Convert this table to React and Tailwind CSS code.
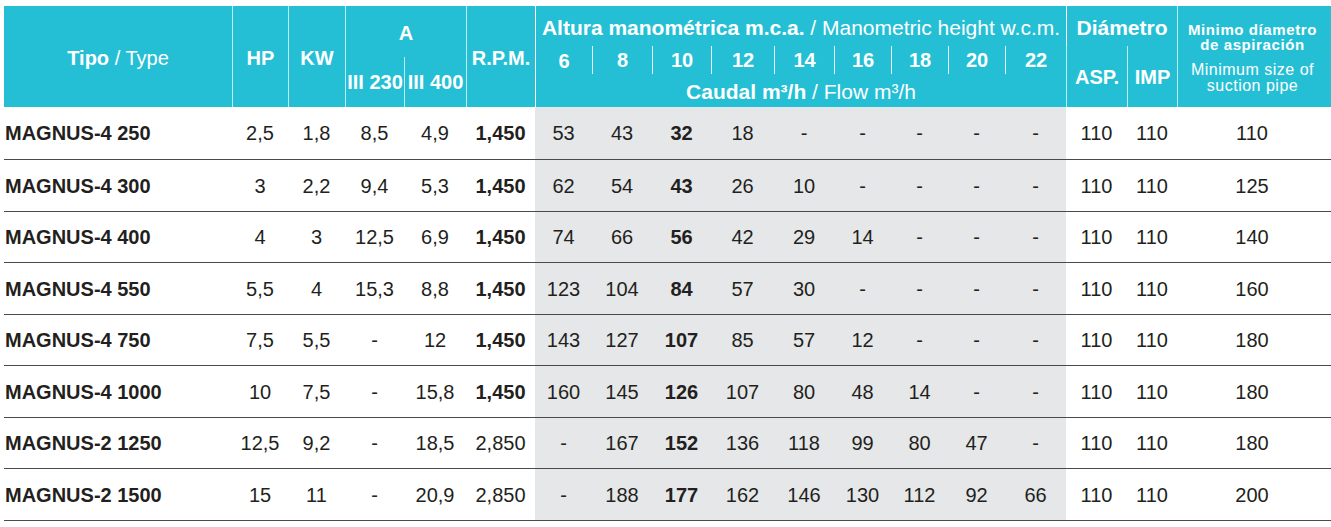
import React from 'react';

const cols =
  'grid grid-cols-[228px_56px_57px_59px_62px_69px_57px_60px_59px_63px_60px_57px_57px_57px_61px_61px_50px_150px]';

const heads = [
  { n: '6', c: 'col-start-7' },
  { n: '8', c: 'col-start-8' },
  { n: '10', c: 'col-start-9' },
  { n: '12', c: 'col-start-10' },
  { n: '14', c: 'col-start-11' },
  { n: '16', c: 'col-start-12' },
  { n: '18', c: 'col-start-13' },
  { n: '20', c: 'col-start-14' },
  { n: '22', c: 'col-start-15' },
];

const rowHeights = ['h-[53px]', 'h-[52px]', 'h-[51px]', 'h-[52px]', 'h-[51px]', 'h-[52px]', 'h-[51px]', 'h-[52px]'];

const pumps = [
  { name: 'MAGNUS-4 250', hp: '2,5', kw: '1,8', a230: '8,5', a400: '4,9', rpm: '1,450', flow: ['53', '43', '32', '18', '-', '-', '-', '-', '-'], min: '110' },
  { name: 'MAGNUS-4 300', hp: '3', kw: '2,2', a230: '9,4', a400: '5,3', rpm: '1,450', flow: ['62', '54', '43', '26', '10', '-', '-', '-', '-'], min: '125' },
  { name: 'MAGNUS-4 400', hp: '4', kw: '3', a230: '12,5', a400: '6,9', rpm: '1,450', flow: ['74', '66', '56', '42', '29', '14', '-', '-', '-'], min: '140' },
  { name: 'MAGNUS-4 550', hp: '5,5', kw: '4', a230: '15,3', a400: '8,8', rpm: '1,450', flow: ['123', '104', '84', '57', '30', '-', '-', '-', '-'], min: '160' },
  { name: 'MAGNUS-4 750', hp: '7,5', kw: '5,5', a230: '-', a400: '12', rpm: '1,450', flow: ['143', '127', '107', '85', '57', '12', '-', '-', '-'], min: '180' },
  { name: 'MAGNUS-4 1000', hp: '10', kw: '7,5', a230: '-', a400: '15,8', rpm: '1,450', flow: ['160', '145', '126', '107', '80', '48', '14', '-', '-'], min: '180' },
  { name: 'MAGNUS-2 1250', hp: '12,5', kw: '9,2', a230: '-', a400: '18,5', rpm: '2,850', flow: ['-', '167', '152', '136', '118', '99', '80', '47', '-'], min: '180' },
  { name: 'MAGNUS-2 1500', hp: '15', kw: '11', a230: '-', a400: '20,9', rpm: '2,850', flow: ['-', '188', '177', '162', '146', '130', '112', '92', '66'], min: '200' },
];

const Header = () => (
  <div className={`${cols} grid-rows-[40px_11px_19px_31px] bg-[#25bfd5] text-white text-[20px] leading-none`}>
    <div className="col-start-1 row-start-1 row-span-4 flex items-center justify-center pt-[3px]">
      <span><b>Tipo</b> / Type</span>
    </div>
    <div className="col-start-2 row-start-1 row-span-4 border-l border-white/70 flex items-center justify-center pt-[3px] font-bold">HP</div>
    <div className="col-start-3 row-start-1 row-span-4 border-l border-white/70 flex items-center justify-center pt-[3px] font-bold">KW</div>
    <div className="col-start-4 col-span-2 row-start-1 row-span-2 border-l border-white/70 flex items-center justify-center pt-[3px] font-bold">A</div>
    <div className="col-start-4 row-start-3 row-span-2 border-l border-white/70 flex items-center justify-center font-bold whitespace-nowrap">III 230</div>
    <div className="col-start-5 row-start-3 row-span-2 border-l border-white/70 flex items-center justify-center font-bold whitespace-nowrap">III 400</div>
    <div className="col-start-6 row-start-1 row-span-4 border-l border-white/70 flex items-center justify-center pt-[3px] font-bold">R.P.M.</div>

    <div className="col-start-7 col-span-9 row-start-1 border-l border-white flex items-center justify-center pt-[3px] text-[21px] whitespace-nowrap">
      <span><b>Altura manométrica m.c.a.</b> / Manometric height w.c.m.</span>
    </div>
    {heads.map((h, i) => (
      <div
        key={h.n}
        className={`${h.c} row-start-2 row-span-2 flex items-center justify-center font-bold ${i === 0 ? 'border-l border-white' : 'border-l border-white/90 mb-[2px]'}`}
      >
        {h.n}
      </div>
    ))}
    <div className="col-start-7 col-span-9 row-start-4 border-l border-white flex items-center justify-center text-[21px] whitespace-nowrap">
      <span><b>Caudal m³/h</b> / Flow m³/h</span>
    </div>

    <div className="col-start-16 col-span-2 row-start-1 border-l border-white flex items-center justify-center pt-[3px] text-[21px] font-bold">Diámetro</div>
    <div className="col-start-16 row-start-2 row-span-3 border-l border-white/70 flex items-center justify-center font-bold">ASP.</div>
    <div className="col-start-17 row-start-2 row-span-3 border-l border-white/70 flex items-center justify-center font-bold">IMP</div>

    <div className="col-start-18 row-start-1 row-span-4 border-l border-white/70 flex flex-col items-center pt-[16px] text-center">
      <p className="text-[15px] leading-[15px] font-bold tracking-[0.6px]">Minimo díametro<br />de aspiración</p>
      <p className="mt-[10px] text-[16px] leading-[16px] tracking-[0.5px]">Minimum size of<br />suction pipe</p>
    </div>
  </div>
);

const Row = ({ pump, h }) => {
  const bold = pump.rpm === '1,450';
  return (
    <div className={`${cols} ${h} border-b border-[#4a4a4a] text-[20px] text-[#231f20]`}>
      <div className="flex items-center pl-px font-bold whitespace-nowrap">{pump.name}</div>
      <div className="flex items-center justify-center">{pump.hp}</div>
      <div className="flex items-center justify-center">{pump.kw}</div>
      <div className="flex items-center justify-center">{pump.a230}</div>
      <div className="flex items-center justify-center">{pump.a400}</div>
      <div className={`flex items-center justify-center ${bold ? 'font-bold' : ''}`}>{pump.rpm}</div>
      {pump.flow.map((f, i) => (
        <div key={i} className={`flex items-center justify-center bg-[#e6e7e8] ${i === 2 ? 'font-bold' : ''}`}>
          {f}
        </div>
      ))}
      <div className="flex items-center justify-center">110</div>
      <div className="flex items-center justify-center">110</div>
      <div className="flex items-center justify-center">{pump.min}</div>
    </div>
  );
};

const App = () => {
  return (
    <div className="w-[1331px] h-[527px] overflow-hidden bg-white pl-1 pt-1.5 font-['Liberation_Sans',Arial,sans-serif]">
      <Header />
      {pumps.map((p, i) => (
        <Row key={p.name} pump={p} h={rowHeights[i]} />
      ))}
    </div>
  );
};

export default App;
